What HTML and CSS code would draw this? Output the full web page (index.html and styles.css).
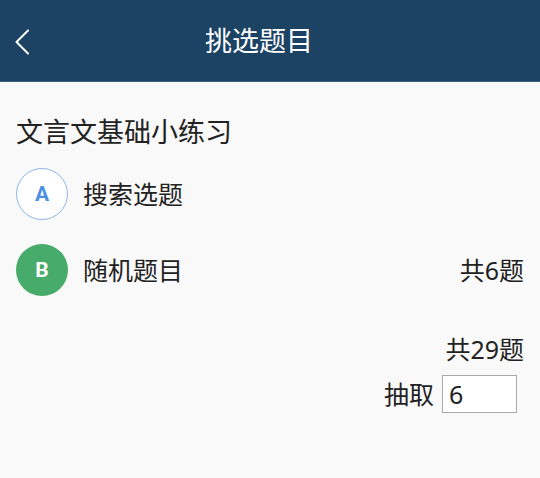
FILE: index.html
```html
<!DOCTYPE html>
<html lang="zh-CN">
<head>
<meta charset="utf-8">
<title>挑选题目</title>
<link rel="stylesheet" href="styles.css">
</head>
<body>
<header class="topbar">
  <span class="back">
    <svg width="16" height="26" viewBox="0 0 16 26"><path d="M14 1.5 L2.5 13 L14 24.5" fill="none" stroke="#ffffff" stroke-width="2" stroke-linecap="round" stroke-linejoin="round"/></svg>
  </span>
  <h1 class="title">挑选题目</h1>
</header>
<main class="content">
  <h2 class="set-name">文言文基础小练习</h2>
  <div class="option">
    <span class="badge badge-a">A</span>
    <span class="label">搜索选题</span>
  </div>
  <div class="option">
    <span class="badge badge-b">B</span>
    <span class="label">随机题目</span>
    <span class="count">共6题</span>
  </div>
  <div class="random">
    <div class="total">共29题</div>
    <div class="pick">
      <span class="pick-label">抽取</span>
      <input class="pick-input" type="text" value="6">
    </div>
  </div>
</main>
</body>
</html>
```
FILE: styles.css
```css
html, body {
  margin: 0;
  padding: 0;
}
body {
  width: 540px;
  height: 478px;
  background: #f9f9f9;
  font-family: "Noto Sans", "Noto Sans CJK SC", sans-serif;
  color: #222222;
  overflow: hidden;
}
.topbar {
  height: 82px;
  background: #1c4364;
  display: flex;
  align-items: center;
  justify-content: center;
  position: relative;
  border-bottom: 1px solid #3b6182;
  box-sizing: border-box;
}
.back {
  position: absolute;
  left: 14px;
  top: 29px;
  display: flex;
}
.title {
  margin: 0 22px 0 0;
  color: #ffffff;
  font-size: 27px;
  font-weight: 400;
  line-height: 36px;
  letter-spacing: 0;
}
.content {
  padding: 32px 16px 0 16px;
}
.set-name {
  margin: 0;
  font-size: 27px;
  font-weight: 400;
  line-height: 36px;
  color: #222222;
}
.option {
  display: flex;
  align-items: center;
  height: 52px;
  margin-top: 18px;
}
.option + .option {
  margin-top: 24px;
}
.badge {
  width: 52px;
  height: 52px;
  border-radius: 50%;
  box-sizing: border-box;
  display: flex;
  align-items: center;
  justify-content: center;
  font-family: "Roboto", "Noto Sans", sans-serif;
  font-weight: 700;
  font-size: 21px;
  flex: none;
}
.badge-a {
  border: 1.5px solid #8cb6ea;
  color: #4a90e2;
  background: #ffffff;
}
.badge-b {
  background: #47ab6c;
  color: #ffffff;
}
.label {
  margin-left: 15px;
  font-size: 25px;
  line-height: 34px;
}
.count {
  margin-left: auto;
  font-size: 25px;
  line-height: 34px;
}
.random {
  display: flex;
  flex-direction: column;
  align-items: flex-end;
  margin-top: 37px;
}
.total {
  font-size: 25px;
  line-height: 32px;
}
.pick {
  display: flex;
  align-items: center;
  margin-top: 10px;
  margin-right: 7px;
}
.pick-label {
  font-size: 25px;
  line-height: 32px;
  margin-right: 8px;
}
.pick-input {
  width: 75px;
  height: 38px;
  box-sizing: border-box;
  border: 1.5px solid #a9a9a9;
  background: #ffffff;
  font-family: "Noto Sans", "Noto Sans CJK SC", sans-serif;
  font-size: 25px;
  color: #222222;
  padding: 0 0 0 6px;
  margin: 0;
  outline: none;
  border-radius: 0;
}
```
